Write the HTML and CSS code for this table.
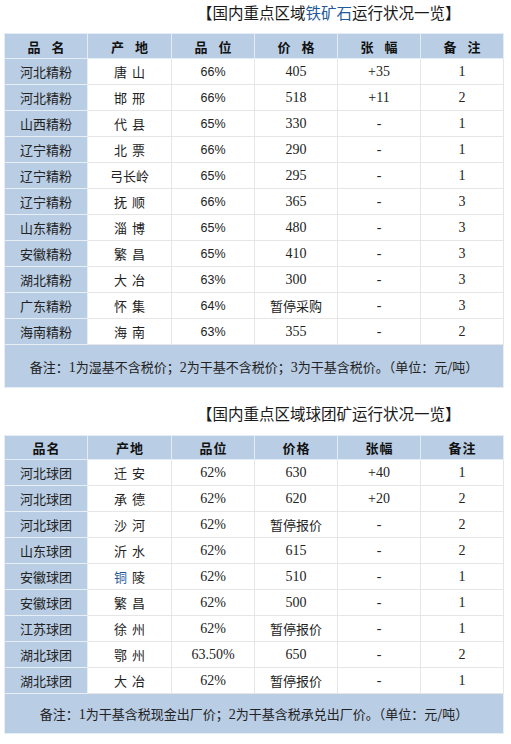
FILE: index.html
```html
<!DOCTYPE html>
<html lang="zh-CN">
<head>
<meta charset="utf-8">
<title>国内重点区域铁矿石运行状况一览</title>
<link rel="stylesheet" href="styles.css">
</head>
<body>
<div class="page">
  <div class="title t1">【国内重点区域<span class="hl">铁矿石</span>运行状况一览】</div>
  <table class="grid g1">
    <colgroup><col class="c1"><col class="c2"><col class="c3"><col class="c4"><col class="c5"><col class="c6"></colgroup>
    <thead>
      <tr><th>品 名</th><th>产 地</th><th>品 位</th><th>价 格</th><th>张 幅</th><th>备 注</th></tr>
    </thead>
    <tbody>
      <tr><td class="nm">河北精粉</td><td>唐 山</td><td class="pc">66%</td><td class="num">405</td><td class="num">+35</td><td class="num">1</td></tr>
      <tr><td class="nm">河北精粉</td><td>邯 邢</td><td class="pc">66%</td><td class="num">518</td><td class="num">+11</td><td class="num">2</td></tr>
      <tr><td class="nm">山西精粉</td><td>代 县</td><td class="pc">65%</td><td class="num">330</td><td class="num">-</td><td class="num">1</td></tr>
      <tr><td class="nm">辽宁精粉</td><td>北 票</td><td class="pc">66%</td><td class="num">290</td><td class="num">-</td><td class="num">1</td></tr>
      <tr><td class="nm">辽宁精粉</td><td>弓长岭</td><td class="pc">65%</td><td class="num">295</td><td class="num">-</td><td class="num">1</td></tr>
      <tr><td class="nm">辽宁精粉</td><td>抚 顺</td><td class="pc">66%</td><td class="num">365</td><td class="num">-</td><td class="num">3</td></tr>
      <tr><td class="nm">山东精粉</td><td>淄 博</td><td class="pc">65%</td><td class="num">480</td><td class="num">-</td><td class="num">3</td></tr>
      <tr><td class="nm">安徽精粉</td><td>繁 昌</td><td class="pc">65%</td><td class="num">410</td><td class="num">-</td><td class="num">3</td></tr>
      <tr><td class="nm">湖北精粉</td><td>大 冶</td><td class="pc">63%</td><td class="num">300</td><td class="num">-</td><td class="num">3</td></tr>
      <tr><td class="nm">广东精粉</td><td>怀 集</td><td class="pc">64%</td><td>暂停采购</td><td class="num">-</td><td class="num">3</td></tr>
      <tr><td class="nm">海南精粉</td><td>海 南</td><td class="pc">63%</td><td class="num">355</td><td class="num">-</td><td class="num">2</td></tr>
      <tr class="note n1"><td colspan="6">备注：<span class="d">1</span>为湿基不含税价；<span class="d">2</span>为干基不含税价；<span class="d">3</span>为干基含税价。（单位：元/吨）</td></tr>
    </tbody>
  </table>

  <div class="title t2">【国内重点区域球团矿运行状况一览】</div>
  <table class="grid g2">
    <colgroup><col class="c1"><col class="c2"><col class="c3"><col class="c4"><col class="c5"><col class="c6"></colgroup>
    <thead>
      <tr><th>品名</th><th>产地</th><th>品位</th><th>价格</th><th>张幅</th><th>备注</th></tr>
    </thead>
    <tbody>
      <tr><td class="nm">河北球团</td><td>迁 安</td><td class="num">62%</td><td class="num">630</td><td class="num">+40</td><td class="num">1</td></tr>
      <tr><td class="nm">河北球团</td><td>承 德</td><td class="num">62%</td><td class="num">620</td><td class="num">+20</td><td class="num">2</td></tr>
      <tr><td class="nm">河北球团</td><td>沙 河</td><td class="num">62%</td><td>暂停报价</td><td class="num">-</td><td class="num">2</td></tr>
      <tr><td class="nm">山东球团</td><td>沂 水</td><td class="num">62%</td><td class="num">615</td><td class="num">-</td><td class="num">2</td></tr>
      <tr><td class="nm">安徽球团</td><td><span class="hl">铜</span> 陵</td><td class="num">62%</td><td class="num">510</td><td class="num">-</td><td class="num">1</td></tr>
      <tr><td class="nm">安徽球团</td><td>繁 昌</td><td class="num">62%</td><td class="num">500</td><td class="num">-</td><td class="num">1</td></tr>
      <tr><td class="nm">江苏球团</td><td>徐 州</td><td class="num">62%</td><td>暂停报价</td><td class="num">-</td><td class="num">1</td></tr>
      <tr><td class="nm">湖北球团</td><td>鄂 州</td><td class="num">63.50%</td><td class="num">650</td><td class="num">-</td><td class="num">2</td></tr>
      <tr><td class="nm">湖北球团</td><td>大 冶</td><td class="num">62%</td><td>暂停报价</td><td class="num">-</td><td class="num">1</td></tr>
      <tr class="note n2"><td colspan="6">备注：<span class="d">1</span>为干基含税现金出厂价；<span class="d">2</span>为干基含税承兑出厂价。（单位：元/吨）</td></tr>
    </tbody>
  </table>
</div>
</body>
</html>
```
FILE: styles.css
```css
html, body {
  margin: 0;
  padding: 0;
  background: #ffffff;
}
body {
  font-family: "Noto Sans CJK SC", "Noto Sans", sans-serif;
  color: #222222;
}
.page {
  width: 511px;
  padding-left: 4px;
  box-sizing: border-box;
}
.title {
  font-size: 15.5px;
  color: #1a1a1a;
  padding-left: 193px;
  white-space: nowrap;
}
.title .hl { color: #1f5a9a; }
.t1 {
  height: 33px;
  line-height: 24px;
}
.t2 {
  height: 47px;
  line-height: 50px;
}
.grid {
  border-collapse: collapse;
  table-layout: fixed;
  width: 499px;
}
.grid .c1 { width: 83px; }
.grid .c2 { width: 84px; }
.grid .c3, .grid .c4, .grid .c5, .grid .c6 { width: 83px; }
.grid th {
  background: #b9cde4;
  font-size: 13px;
  font-weight: bold;
  color: #111111;
  border: 1px solid #e4ecf5;
  padding: 0;
  text-align: center;
}
.g1 th { height: 24px; letter-spacing: 4px; text-indent: 4px; }
.g2 th { height: 23px; letter-spacing: 1px; text-indent: 1px; }
.grid td {
  height: 25px;
  padding: 0;
  text-align: center;
  font-size: 13px;
  border: 1px solid #e6e6e6;
  white-space: nowrap;
  word-spacing: 2px;
}
.grid td.nm {
  background: #b9cde4;
  border-color: #e8eef6;
}
.grid td.num, .grid .d {
  font-family: "Liberation Serif", "Noto Sans CJK SC", serif;
  font-size: 14px;
}
.grid td.pc {
  font-family: "Liberation Sans", sans-serif;
  font-size: 12.5px;
}
.grid td .hl { color: #1f5a9a; }
.note td {
  background: #b9cde4;
  border-color: #e8eef6;
  font-size: 13px;
  color: #222222;
  word-spacing: 0;
}
.n1 td { height: 42px; }
.n2 td { height: 39px; }
```
